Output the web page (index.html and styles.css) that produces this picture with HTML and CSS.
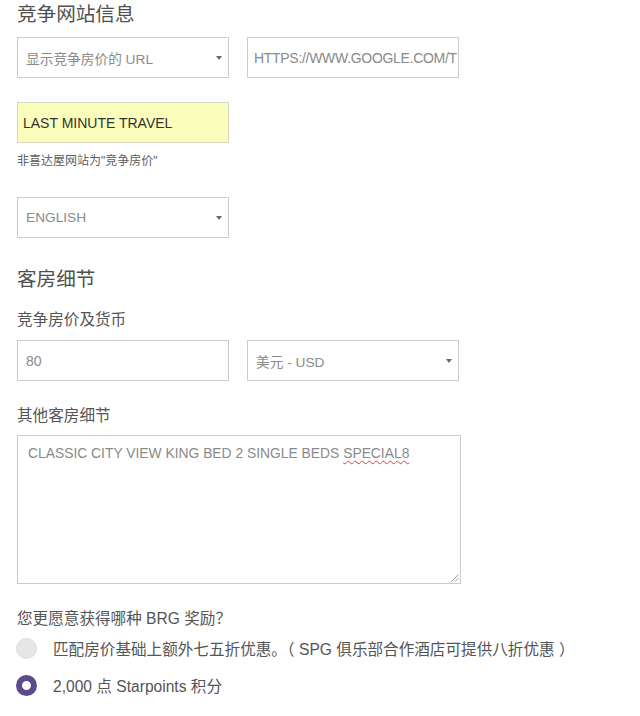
FILE: index.html
```html
<!DOCTYPE html>
<html lang="zh-CN">
<head>
<meta charset="utf-8">
<link rel="stylesheet" href="styles.css">
</head>
<body>
<div class="page">
  <h1 class="section-title first">竞争网站信息</h1>
  <div class="row row-url">
    <div class="field select"><span class="value">显示竞争房价的 URL</span><span class="arrow"></span></div>
    <div class="field url"><span class="value">HTTPS://WWW.GOOGLE.COM/T</span></div>
  </div>
  <div class="field filled yellow"><span class="value">LAST MINUTE TRAVEL</span></div>
  <p class="hint">非喜达屋网站为"竞争房价"</p>
  <div class="field select lang"><span class="value">ENGLISH</span><span class="arrow"></span></div>

  <h2 class="section-title second">客房细节</h2>
  <div class="label">竞争房价及货币</div>
  <div class="row">
    <div class="field"><span class="value">80</span></div>
    <div class="field select"><span class="value">美元 - USD</span><span class="arrow"></span></div>
  </div>
  <div class="label label-other">其他客房细节</div>
  <div class="textarea">
    <span class="value">CLASSIC CITY VIEW KING BED 2 SINGLE BEDS <span class="misspelled">SPECIAL8</span></span>
    <svg class="grip" width="9" height="9" viewBox="0 0 9 9"><path d="M8.5 1.5 L1.5 8.5 M8.5 5 L5 8.5" stroke="#9a9a9a" stroke-width="1" fill="none"/></svg>
  </div>

  <div class="label label-q">您更愿意获得哪种 BRG 奖励？</div>
  <div class="radio-row">
    <span class="radio"></span>
    <span class="radio-text">匹配房价基础上额外七五折优惠。（ SPG 俱乐部合作酒店可提供八折优惠 ）</span>
  </div>
  <div class="radio-row">
    <span class="radio checked"></span>
    <span class="radio-text">2,000 点 Starpoints 积分</span>
  </div>
</div>
</body>
</html>
```

FILE: styles.css
```css
* { box-sizing: border-box; }
html, body { margin: 0; padding: 0; background: #ffffff; }
body {
  font-family: "Liberation Sans", "Noto Sans CJK SC", sans-serif;
  color: #555555;
}
.page {
  padding: 0 0 0 17px;
  width: 640px;
}
.section-title {
  font-size: 19.6px;
  font-weight: normal;
  line-height: 28px;
  margin: 0;
  color: #505050;
}
.first { margin-top: 0; }
.second { margin-top: 27px; }
.row {
  display: flex;
  gap: 18px;
}
.row-url { margin-top: 9px; }
.field {
  position: relative;
  width: 212px;
  height: 41px;
  border: 1px solid #cccccc;
  background: #ffffff;
  display: flex;
  align-items: center;
  padding: 0 8px;
  font-size: 14px;
  color: #8a8a8a;
  white-space: nowrap;
  overflow: hidden;
}
.select { font-size: 13.7px; }
.select .value { flex: 1; }
.url {
  padding-left: 6px;
  padding-right: 0;
  letter-spacing: -0.3px;
}
.arrow {
  width: 0;
  height: 0;
  border-left: 3px solid transparent;
  border-right: 3px solid transparent;
  border-top: 4px solid #6a6a6a;
  margin-right: -2px;
}
.yellow {
  margin-top: 24px;
  background: #fbfdbb;
  border-color: #d8d8c0;
  color: #333333;
  padding-left: 5px;
}
.hint {
  margin: 10px 0 0;
  font-size: 12px;
  line-height: 16px;
  color: #606060;
}
.lang { margin-top: 28px; }
.label {
  font-size: 15.6px;
  line-height: 20px;
  color: #555555;
  margin-top: 17px;
  margin-bottom: 10px;
}
.label-other { margin-top: 25px; margin-bottom: 9px; }
.textarea {
  position: relative;
  width: 444px;
  height: 149px;
  border: 1px solid #cccccc;
  padding: 8px 10px;
  font-size: 13.85px;
  line-height: 18px;
  color: #8a8a8a;
}
.misspelled {
  text-decoration: underline wavy #d04040;
  text-decoration-thickness: 1px;
  text-underline-offset: 2px;
}
.grip {
  position: absolute;
  right: 1px;
  bottom: 1px;
}
.label-q { margin-top: 25px; margin-bottom: 8px; }
.radio-row {
  display: flex;
  align-items: center;
  gap: 16px;
  height: 22px;
  margin-bottom: 15px;
  margin-left: -1px;
}
.radio {
  width: 21px;
  height: 21px;
  border-radius: 50%;
  background: #e6e6e6;
  border: 1px solid #dddddd;
  flex: none;
}
.radio.checked {
  background: #ffffff;
  border: 6px solid #5d4a8c;
}
.radio-text {
  font-size: 15.6px;
  color: #555555;
  white-space: nowrap;
}
```
